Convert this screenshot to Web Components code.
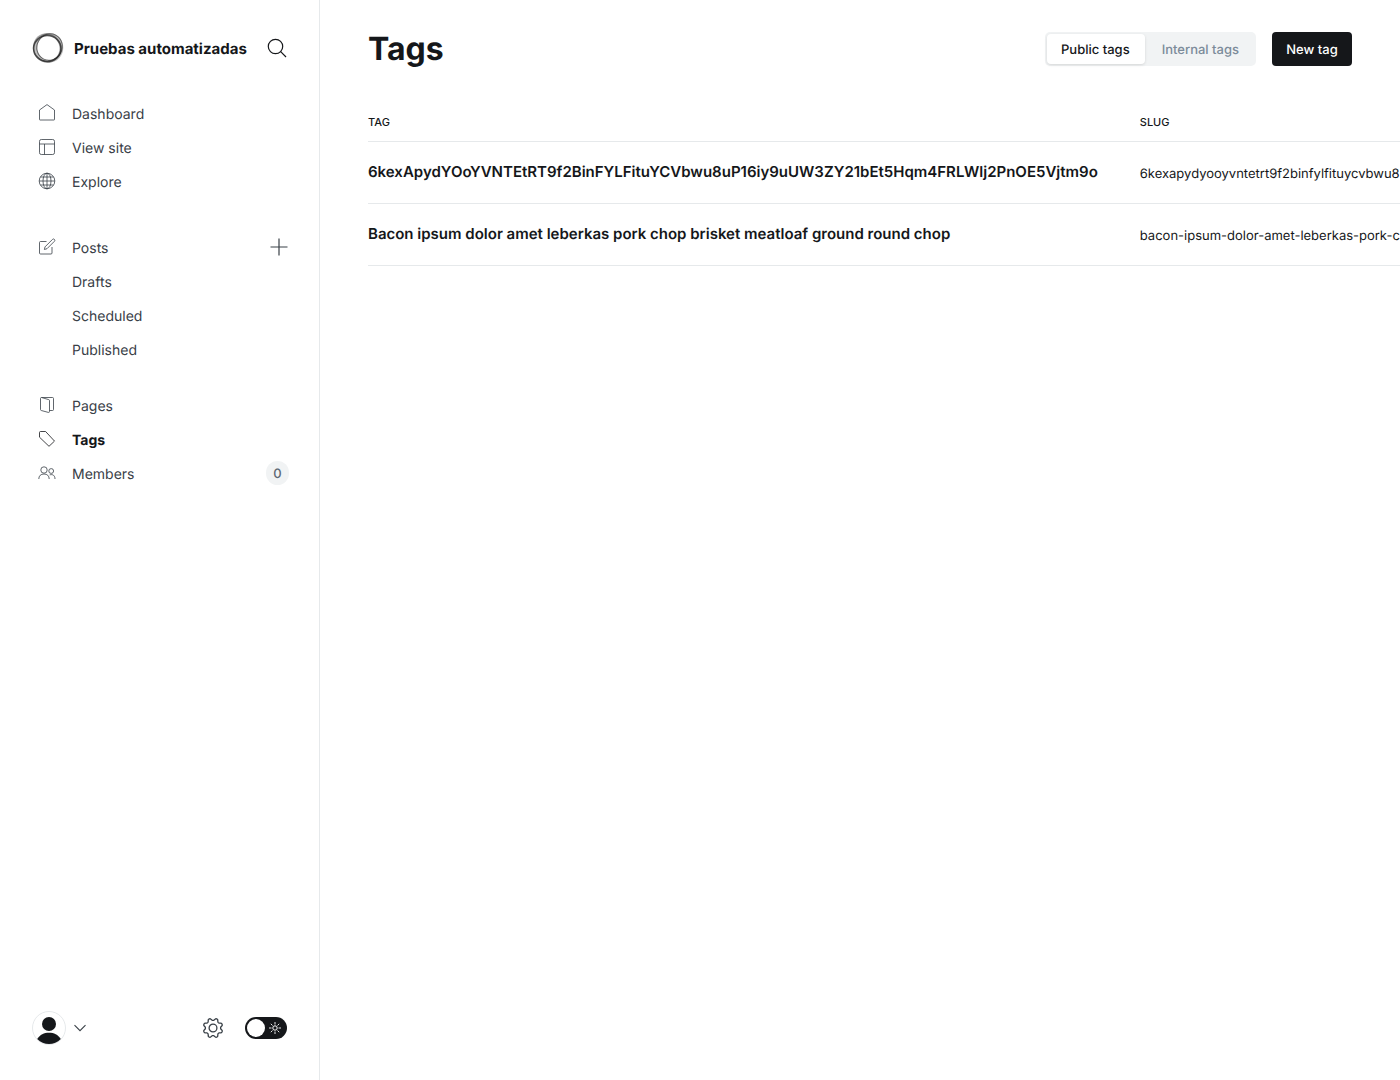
<!DOCTYPE html>
<html lang="en">
<head>
<meta charset="utf-8">
<title>Tags</title>
<style>
:root{--ink:#15171a;--grey:#394047;--mid:#7c8b9a;--line:#e6e9eb;--soft:#f1f3f4}
html,body{margin:0;height:100%}
body{font-family:Inter,"Liberation Sans",sans-serif;color:var(--ink);background:#fff;overflow:hidden;text-rendering:geometricPrecision}
</style>
</head>
<body>
<admin-app>
  <side-bar slot="nav">
    <site-header slot="top">Pruebas automatizadas</site-header>
    <nav-group class="first">
      <nav-item icon="home">Dashboard</nav-item>
      <nav-item icon="site">View site</nav-item>
      <nav-item icon="globe">Explore</nav-item>
    </nav-group>
    <nav-group class="posts">
      <nav-item icon="edit" add="New post">Posts</nav-item>
      <nav-item>Drafts</nav-item>
      <nav-item>Scheduled</nav-item>
      <nav-item>Published</nav-item>
    </nav-group>
    <nav-group>
      <nav-item icon="pages">Pages</nav-item>
      <nav-item icon="tag" active>Tags</nav-item>
      <nav-item icon="members" count="0">Members</nav-item>
    </nav-group>
    <user-bar slot="bottom"></user-bar>
  </side-bar>
  <page-header>
    <span slot="title">Tags</span>
    <span slot="one">Public tags</span>
    <span slot="two">Internal tags</span>
    <span slot="action">New tag</span>
  </page-header>
  <tag-table></tag-table>
</admin-app>
<script>
const define = (name, css, html) => customElements.define(name, class extends HTMLElement {
  connectedCallback() {
    if (this.shadowRoot) return;
    this.attachShadow({mode: "open"}).innerHTML =
      `<style>*{box-sizing:border-box}button{font:inherit;color:inherit;text-rendering:inherit;border:0;padding:0;background:none;cursor:pointer}a{color:inherit;text-decoration:none}svg{display:block;fill:none;stroke:currentColor;flex:none}${css}</style>` +
      (typeof html === "function" ? html(this) : html);
  }
});

const icons = {
  home: '<path d="M1.500 6 9 .6l7.500 5.400v9.500a.5.5 0 0 1-.5.500H2a.5.5 0 0 1-.5-.500z"/>',
  site: '<rect x="1.500" y="1.500" width="15" height="15" rx="1.800"/><path d="M1.500 6h15M6.500 6v10.500"/>',
  globe: '<circle cx="9" cy="9" r="7.800"/><ellipse cx="9" cy="9" rx="4" ry="7.800"/><path d="M9 1.200v15.600M1.200 9h15.600M2.500 5h13M2.500 13h13"/>',
  edit: '<path d="M8.500 3.500H2.500a1 1 0 0 0-1 1v10.500a1 1 0 0 0 1 1h10.500a1 1 0 0 0 1-1V9M7 8.900l7.500-7.500a1.300 1.300 0 0 1 1.900 1.900L9 10.700l-2.600.800z"/>',
  pages: '<path d="M3.500 1.500h11a1 1 0 0 1 1 1v11a1 1 0 0 1-1 1h-3M3.500 1.500a1 1 0 0 0-1 1v11a1 1 0 0 0 .8 1l7 1.900a1 1 0 0 0 1.200-1V4.600a1 1 0 0 0-.8-1z"/>',
  tag: '<path d="M1.500 2.500v4.700L11 16.300l5.500-5.200L7.600 1.500H2.500a1 1 0 0 0-1 1z"/>',
  members: '<circle cx="6" cy="6" r="3.200"/><path d="M.8 15c0-3.200 2-5 5.200-5s5.200 1.800 5.200 5"/><circle cx="13.200" cy="7" r="2.400"/><path d="M11.700 10.900c3-1 5.300.6 5.300 4.100"/>'
};

define("admin-app",
  `:host{display:flex;min-height:100vh}main{flex:1;min-width:0;padding:32px 48px;overflow:hidden}`,
  `<slot name="nav"></slot><main><slot></slot></main>`);

define("side-bar",
  `:host{display:flex;flex-direction:column;flex:none;width:320px;min-height:100vh;padding:32px 32px 36px;border-right:1px solid var(--line);box-sizing:border-box}nav{flex:1;padding-top:33px}`,
  `<slot name="top"></slot><nav aria-label="Main"><slot></slot></nav><slot name="bottom"></slot>`);

define("site-header",
  `:host{display:flex;align-items:center;gap:10px;height:32px;font-size:15px;line-height:20px;font-weight:700}
   .name{flex:1;padding-top:2px;white-space:nowrap}button{width:20px;height:20px;color:var(--ink)}`,
  `<svg width="32" height="32" viewBox="0 0 32 32"><g stroke="#222"><ellipse cx="15.300" cy="16.500" rx="13.700" ry="13" stroke-width="1.600" opacity=".75"/><ellipse cx="17.500" cy="14.800" rx="12.600" ry="13.400" transform="rotate(28 17 15)" stroke-width="1" opacity=".6"/><ellipse cx="17" cy="15.800" rx="13" ry="13.600" stroke-width="2.600" opacity=".28"/><ellipse cx="15" cy="16" rx="13.200" ry="14" transform="rotate(-20 15 16)" stroke-width="1.600" opacity=".4"/></g></svg>
   <span class="name"><slot></slot></span>
   <button aria-label="Search"><svg width="20" height="20" viewBox="0 0 20 20" stroke-width="1.200"><circle cx="8.500" cy="8.500" r="7.200"/><path d="m13.700 13.700 5.300 5.300"/></svg></button>`);

define("nav-group", `:host{display:block;margin-bottom:22px}:host(.first){margin-bottom:32px}`, `<slot></slot>`);

define("nav-item",
  `:host{display:flex;align-items:center;height:34px;padding-left:6px;font-size:14px;line-height:20px;color:var(--grey)}
   :host([active]){font-weight:700;color:var(--ink)}
   a.link{display:flex;align-items:center;flex:1;gap:16px}
   .icon{width:18px;height:20px}
   .label{padding-top:2px}
   .icon svg{stroke-width:.8}
   .count{display:block;min-width:23px;height:24px;margin:0 -2px 2px 0;border-radius:12px;background:var(--soft);text-align:center;line-height:26px;font-size:13px;font-weight:500;color:#5d6873}
   .add{margin:0 -1px 2px 0}`,
  el => `<a class="link" href="#"><span class="icon">${el.getAttribute("icon") ? `<svg width="18" height="18" viewBox="0 0 18 18">${icons[el.getAttribute("icon")]}</svg>` : ""}</span><span class="label"><slot></slot></span></a>` +
    (el.hasAttribute("add") ? `<a class="add" href="#" aria-label="${el.getAttribute("add")}"><svg width="18" height="18" viewBox="0 0 18 18"><path d="M9 .5v17M.5 9h17" stroke-width="1.200"/></svg></a>` : "") +
    (el.hasAttribute("count") ? `<span class="count">${el.getAttribute("count")}</span>` : ""));

const teeth = Array.from({length: 64}, (_, i) => {
  const a = i / 64 * Math.PI * 2, r = 8.7 + 1.1 * Math.tanh(2.4 * Math.cos(a * 8 + Math.PI));
  return (11 + r * Math.cos(a)).toFixed(2) + " " + (11 + r * Math.sin(a)).toFixed(2);
}).join("L");

define("user-bar",
  `:host{display:flex;align-items:center;justify-content:space-between;height:32px;color:var(--grey)}
   .user,.tools{display:flex;align-items:center}.user{gap:7px}.tools{gap:21px}
   label{display:grid;align-items:center;width:42px;height:22px;border-radius:11px;background:var(--ink);color:#fff;cursor:pointer}
   label>*{grid-area:1/1}
   input{appearance:none;width:18px;height:18px;margin:0 0 0 2px;border-radius:50%;background:#fff;cursor:pointer}
   label svg{justify-self:end;margin-right:5px}`,
  `<button class="user" aria-label="User menu"><svg width="34" height="34" viewBox="0 0 34 34"><circle cx="17" cy="17" r="16.500" stroke="#e6e9eb"/><g fill="#15171a" stroke="none"><circle cx="17" cy="13" r="7"/><path d="M5.200 28C8 23.600 12 21.800 17 21.800s9 1.800 11.800 6.200C25.500 31.500 21.500 33 17 33S8.500 31.500 5.200 28z"/></g></svg>
   <svg width="14" height="14" viewBox="0 0 14 14"><path d="m1.500 4.200 5.500 5.500 5.500-5.500" stroke-width="1.100"/></svg></button>
   <div class="tools"><a href="#" aria-label="Settings"><svg width="22" height="22" viewBox="0 0 22 22" stroke-width="1.300" stroke-linejoin="round"><path d="M${teeth}z"/><circle cx="11" cy="11" r="3.900"/></svg></a>
   <label><input type="checkbox" role="switch" aria-label="Night shift"><svg width="14" height="14" viewBox="0 0 14 14"><circle cx="7" cy="7" r="2.200"/><path d="M7 1v2.500M7 10.500V13M1 7h2.500M10.500 7H13M2.800 2.800l1.700 1.700M9.500 9.500l1.700 1.700M2.800 11.200l1.700-1.700M9.500 4.500l1.700-1.700" stroke-width=".9"/></svg></label></div>`);

define("page-header",
  `:host{display:flex;align-items:center;justify-content:space-between;height:34px}
   h1{margin:0;font-size:32px;line-height:34px;font-weight:700}
   .actions,.switch{display:flex}.actions{gap:16px;font-size:13px;line-height:18px;font-weight:500}
   .switch{height:34px;padding:2px;border-radius:5px;background:var(--soft)}
   .switch button{padding:2px 15px 0 14px;border-radius:4px;color:var(--mid)}
   .switch button:last-child{padding:2px 15px 0 17px}
   .switch .on{background:#fff;color:var(--ink);box-shadow:0 1px 3px #0000001f}
   .new{min-width:80px;height:34px;padding:2px 14px 0;border-radius:4px;background:var(--ink);color:#fff}`,
  `<h1><slot name="title"></slot></h1><div class="actions"><div class="switch"><button class="on" aria-pressed="true"><slot name="one"></slot></button><button aria-pressed="false"><slot name="two"></slot></button></div><button class="new"><slot name="action"></slot></button></div>`);

const tags = [
  ["6kexApydYOoYVNTEtRT9f2BinFYLFituYCVbwu8uP16iy9uUW3ZY21bEt5Hqm4FRLWlj2PnOE5Vjtm9o", "6kexapydyooyvntetrt9f2binfylfituycvbwu8up16iy9uuw3zy21bet5hqm4frlwlj2pnoe5vjtm9o"],
  ["Bacon ipsum dolor amet leberkas pork chop brisket meatloaf ground round chop", "bacon-ipsum-dolor-amet-leberkas-pork-chop-brisket-meatloaf-ground-round-chop"]
];
define("tag-table",
  `:host{display:block;margin-top:36px}
   table{border-collapse:separate;border-spacing:0;min-width:100%;white-space:nowrap}
   th,td{padding:0 42px 0 0;text-align:left;border-bottom:1px solid var(--line)}
   th{height:40px;font-size:11px;line-height:16px;font-weight:500;text-transform:uppercase}
   td{height:62px}
   .name{padding-bottom:2px;font-size:15px;line-height:20px;font-weight:600}
   .slug{padding-top:2px;font-size:13px;line-height:18px}`,
  `<table><thead><tr><th scope="col">Tag</th><th scope="col">Slug</th></tr></thead><tbody>${tags.map(([n, s]) => `<tr><td class="name"><a href="#">${n}</a></td><td class="slug"><a href="#">${s}</a></td></tr>`).join("")}</tbody></table>`);
</script>
</body>
</html>
